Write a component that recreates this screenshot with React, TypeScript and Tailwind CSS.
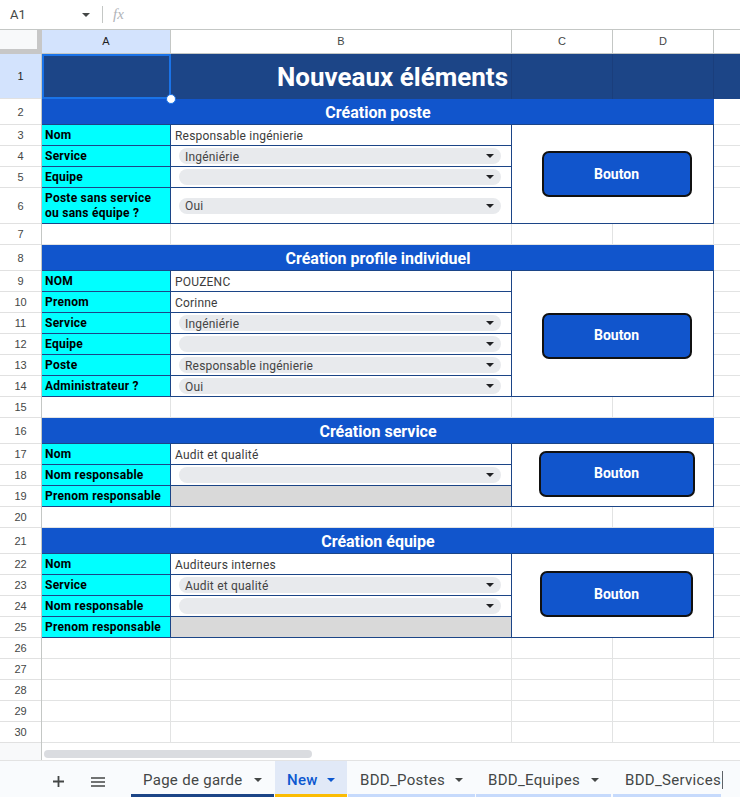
import React from 'react';

const H: Record<number, string> = {
  21: 'h-[21px]',
  26: 'h-[26px]',
  36: 'h-[36px]',
  45: 'h-[45px]',
};

const ROW_HEIGHTS = [45, 26, 21, 21, 21, 36, 21, 26, 21, 21, 21, 21, 21, 21, 21, 26, 21, 21, 21, 21, 26, 21, 21, 21, 21, 21, 21, 21, 21, 21];

type Row = { label: React.ReactNode; kind: 'text' | 'dd' | 'gray'; value?: string; h: number };

function Caret({ className }: { className?: string }) {
  return (
    <svg width="8" height="4" viewBox="0 0 8 4" className={className}>
      <path d="M0 0H8L4 4Z" fill="currentColor" />
    </svg>
  );
}

function Dropdown({ value }: { value: string }) {
  return (
    <div className="ml-[8px] flex h-[16px] w-[322px] items-center justify-between rounded-full bg-[#e8eaed] pl-[6px] pr-[7px] text-[12px] leading-none tracking-[0.2px] text-[#444444]">
      <span className="pt-[1px]">{value}</span>
      <Caret className="text-[#202124]" />
    </div>
  );
}

function ValueCell({ row }: { row: Row }) {
  if (row.kind === 'text') {
    return (
      <div className="flex h-full w-[341px] items-center border-b border-r border-[#1c4587] pl-[4px] pt-[1px] text-[12px] tracking-[0.2px] text-[#3c3c3c]">
        {row.value}
      </div>
    );
  }
  if (row.kind === 'gray') {
    return <div className="h-full w-[341px] border-b border-r border-[#1c4587] bg-[#d9d9d9]" />;
  }
  return (
    <div className="flex h-full w-[341px] items-center border-b border-r border-[#1c4587]">
      <Dropdown value={row.value ?? ''} />
    </div>
  );
}

function Section({ title, rows, btnClass }: { title: string; rows: Row[]; btnClass: string }) {
  return (
    <div className="flex flex-col">
      <div className="flex h-[26px]">
        <div className="flex w-[672px] items-center justify-center border-b border-[#1c4587] bg-[#1155cc] pt-[2px] text-[16px] font-bold leading-none text-white">
          {title}
        </div>
        <div className="flex-1 border-b border-[#e2e3e3]" />
      </div>
      <div className="flex">
        <div className="flex w-[470px] flex-col">
          {rows.map((r, i) => (
            <div key={i} className={`flex ${H[r.h]}`}>
              <div className="flex h-full w-[129px] items-center border-b border-r border-[#1c4587] bg-[#00ffff] pl-[3px] pt-[1px] text-[12px] font-bold leading-[15px] tracking-[0.25px] text-black">
                {r.label}
              </div>
              <ValueCell row={r} />
            </div>
          ))}
        </div>
        <div className="flex w-[202px] items-center justify-center border-b border-r border-[#1c4587]">
          <div
            className={`flex h-[46px] items-center justify-center rounded-[7px] border-2 border-[#111111] bg-[#1155cc] text-[14px] font-bold text-white ${btnClass}`}
          >
            Bouton
          </div>
        </div>
        <div className="flex flex-1 flex-col">
          {rows.map((r, i) => (
            <div key={i} className={`${H[r.h]} border-b border-[#e2e3e3]`} />
          ))}
        </div>
      </div>
    </div>
  );
}

function EmptyRow() {
  return (
    <div className="flex h-[21px]">
      <div className="w-[129px] border-b border-r border-[#e2e3e3]" />
      <div className="w-[341px] border-b border-r border-[#e2e3e3]" />
      <div className="w-[101px] border-b border-r border-[#e2e3e3]" />
      <div className="w-[101px] border-b border-r border-[#e2e3e3]" />
      <div className="flex-1 border-b border-[#e2e3e3]" />
    </div>
  );
}

function FormulaBar() {
  return (
    <div className="flex h-[30px] items-center border-b border-[#c4c7c5] bg-white">
      <div className="flex w-[96px] items-center justify-between pl-[10px] pr-[6px]">
        <span className="text-[13px] text-[#444746]">A1</span>
        <Caret className="text-[#444746]" />
      </div>
      <div className="ml-[6px] h-[17px] w-px bg-[#c4c7c5]" />
      <span className="ml-[10px] text-[15px] italic text-[#b0b3b8] [font-family:'Liberation_Serif',serif]">fx</span>
    </div>
  );
}

function ColumnHeaders() {
  return (
    <div className="flex h-[24px] text-[11px] text-[#444746] [font-family:'Liberation_Sans',Arial,sans-serif]">
      <div className="w-[42px] border-b-[5px] border-r-[5px] border-[#c7c7c7] bg-[#f8f9fa]" />
      <div className="flex w-[129px] items-center justify-center border-b border-r border-[#c4c7c5] bg-[#d3e3fd] text-[#1f1f1f]">A</div>
      <div className="flex w-[341px] items-center justify-center border-b border-r border-[#c4c7c5]">B</div>
      <div className="flex w-[101px] items-center justify-center border-b border-r border-[#c4c7c5]">C</div>
      <div className="flex w-[101px] items-center justify-center border-b border-r border-[#c4c7c5]">D</div>
      <div className="flex-1 border-b border-[#c4c7c5]" />
    </div>
  );
}

function RowHeaders() {
  return (
    <div className="flex w-[42px] flex-col border-r border-[#c4c7c5] text-[11px] text-[#444746] [font-family:'Liberation_Sans',Arial,sans-serif]">
      {ROW_HEIGHTS.map((h, i) => (
        <div
          key={i}
          className={`flex items-center justify-center border-b border-[#e1e1e1] pt-[1px] ${H[h]} ${i === 0 ? 'bg-[#d3e3fd] text-[#1f1f1f]' : ''}`}
        >
          {i + 1}
        </div>
      ))}
    </div>
  );
}

function TitleRow() {
  return (
    <div className="relative flex h-[45px] bg-[#1c4587]">
      <div className="w-[129px] border-r border-[#1a3e7c]" />
      <div className="flex w-[341px] items-center justify-end border-r border-[#1a3e7c] pr-[3px] text-[26px] font-bold leading-none text-white">
        Nouveaux éléments
      </div>
      <div className="w-[101px] border-r border-[#1a3e7c]" />
      <div className="w-[101px] border-r border-[#1a3e7c]" />
      <div className="flex-1" />
      <div className="absolute left-0 top-0 h-[45px] w-[129px] border-2 border-[#1a73e8]" />
      <div className="absolute left-[124px] top-[40px] h-[10px] w-[10px] rounded-full border-[1.5px] border-[#1a73e8] bg-white" />
    </div>
  );
}

function ScrollRow() {
  return (
    <div className="flex h-[17px]">
      <div className="w-[42px] border-r border-[#c4c7c5] bg-[#f8f9fa]" />
      <div className="flex-1 bg-white pl-[2px] pt-[7px]">
        <div className="h-[8px] w-[268px] rounded-full bg-[#dadce0]" />
      </div>
    </div>
  );
}

function Tab({ label, underline, active, widthClass }: { label: string; underline: string; active?: boolean; widthClass: string }) {
  return (
    <div
      className={`flex h-full items-center justify-between border-b-[3px] px-[12px] pt-[5px] ${widthClass} ${underline} ${active ? 'bg-[#e1e9f7] font-medium text-[#0b57d0]' : 'text-[#444746]'}`}
    >
      <span className="text-[15px] tracking-[0.3px]">{label}</span>
      <Caret className={active ? 'text-[#0b57d0]' : 'text-[#444746]'} />
    </div>
  );
}

function TabBar() {
  return (
    <div className="flex h-[37px] items-stretch border-t border-[#e3e3e3] bg-[#f9fbfd]">
      <div className="ml-[48px] flex w-[20px] items-center justify-center pt-[5px]">
        <svg width="11" height="11" viewBox="0 0 11 11">
          <path d="M5.5 0V11M0 5.5H11" stroke="#444746" strokeWidth="1.8" />
        </svg>
      </div>
      <div className="ml-[20px] flex w-[20px] items-center justify-center pt-[5px]">
        <svg width="14" height="10" viewBox="0 0 14 10">
          <path d="M0 1H14M0 5H14M0 9H14" stroke="#444746" strokeWidth="1.6" />
        </svg>
      </div>
      <div className="ml-[23px] flex gap-[1px]">
        <Tab label="Page de garde" underline="border-[#1c4587]" widthClass="w-[143px]" />
        <Tab label="New" underline="border-[#fbbc04]" active widthClass="w-[72px]" />
        <Tab label="BDD_Postes" underline="border-[#c6dafc]" widthClass="w-[127px]" />
        <Tab label="BDD_Equipes" underline="border-[#c6dafc]" widthClass="w-[135px]" />
        <div className="ml-[1px] flex h-full w-[108px] items-center overflow-hidden whitespace-nowrap border-b-[3px] border-[#c6dafc] pl-[12px] pt-[5px] text-[15px] tracking-[0.3px] text-[#444746]">
          BDD_Services
        </div>
        <div className="mt-[10px] h-[18px] w-px bg-[#5f6368]" />
      </div>
    </div>
  );
}

const S1: Row[] = [
  { label: 'Nom', kind: 'text', value: 'Responsable ingénierie', h: 21 },
  { label: 'Service', kind: 'dd', value: 'Ingéniérie', h: 21 },
  { label: 'Equipe', kind: 'dd', value: '', h: 21 },
  {
    label: (
      <span>
        Poste sans service
        <br />
        ou sans équipe ?
      </span>
    ),
    kind: 'dd',
    value: 'Oui',
    h: 36,
  },
];

const S2: Row[] = [
  { label: 'NOM', kind: 'text', value: 'POUZENC', h: 21 },
  { label: 'Prenom', kind: 'text', value: 'Corinne', h: 21 },
  { label: 'Service', kind: 'dd', value: 'Ingéniérie', h: 21 },
  { label: 'Equipe', kind: 'dd', value: '', h: 21 },
  { label: 'Poste', kind: 'dd', value: 'Responsable ingénierie', h: 21 },
  { label: 'Administrateur ?', kind: 'dd', value: 'Oui', h: 21 },
];

const S3: Row[] = [
  { label: 'Nom', kind: 'text', value: 'Audit et qualité', h: 21 },
  { label: 'Nom responsable', kind: 'dd', value: '', h: 21 },
  { label: 'Prenom responsable', kind: 'gray', h: 21 },
];

const S4: Row[] = [
  { label: 'Nom', kind: 'text', value: 'Auditeurs internes', h: 21 },
  { label: 'Service', kind: 'dd', value: 'Audit et qualité', h: 21 },
  { label: 'Nom responsable', kind: 'dd', value: '', h: 21 },
  { label: 'Prenom responsable', kind: 'gray', h: 21 },
];

export default function App() {
  return (
    <div className="h-[797px] w-[740px] overflow-hidden bg-white [font-family:Roboto,_sans-serif]">
      <FormulaBar />
      <ColumnHeaders />
      <div className="flex">
        <RowHeaders />
        <div className="flex w-[698px] flex-col">
          <TitleRow />
          <Section title="Création poste" rows={S1} btnClass="ml-[8px] w-[150px]" />
          <EmptyRow />
          <Section title="Création profile individuel" rows={S2} btnClass="ml-[8px] mt-[4px] w-[150px]" />
          <EmptyRow />
          <Section title="Création service" rows={S3} btnClass="ml-[8px] -mt-[3px] w-[156px]" />
          <EmptyRow />
          <Section title="Création équipe" rows={S4} btnClass="ml-[8px] -mt-[3px] w-[153px]" />
          <EmptyRow />
          <EmptyRow />
          <EmptyRow />
          <EmptyRow />
          <EmptyRow />
        </div>
      </div>
      <ScrollRow />
      <TabBar />
    </div>
  );
}
